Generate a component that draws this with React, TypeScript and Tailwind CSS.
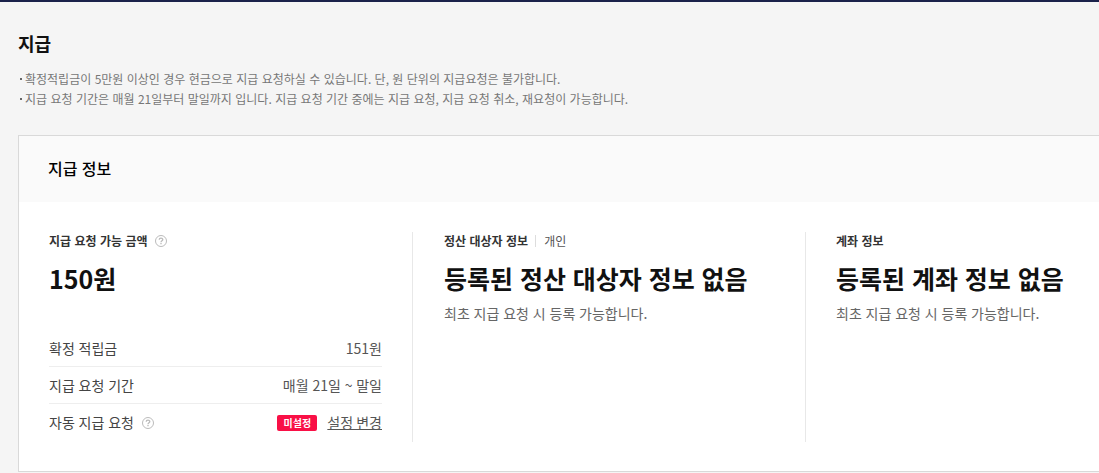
import React from 'react';

const notices = [
  '확정적립금이 5만원 이상인 경우 현금으로 지급 요청하실 수 있습니다. 단, 원 단위의 지급요청은 불가합니다.',
  '지급 요청 기간은 매월 21일부터 말일까지 입니다. 지급 요청 기간 중에는 지급 요청, 지급 요청 취소, 재요청이 가능합니다.',
];

function HelpIcon() {
  return (
    <svg className="w-3 h-3 shrink-0" viewBox="0 0 12 12" fill="none" stroke="#bbbbbb">
      <circle cx="6" cy="6" r="5.5" />
      <path strokeWidth="1.3" d="M4.2 4.7C4.2 2.6 7.8 2.6 7.8 4.6C7.8 5.8 6 5.8 6 7.2M6 8V9.3" />
    </svg>
  );
}

function App() {
  return (
    <div className="h-[473px] overflow-hidden bg-[#f5f5f5] border-t-2 border-[#1b224b] pl-[18px] font-['Noto_Sans_CJK_KR',sans-serif] text-[#111] [word-spacing:0.7px]">
      <h1 className="mt-[28px] h-[26px] leading-[26px] text-[18px] font-bold">지급</h1>
      <ul className="mt-[13px] text-[12px] leading-[20px] text-[#777] whitespace-nowrap">
        {notices.map((notice) => (
          <li key={notice} className="flex items-center">
            <span className="ml-[2px] mr-[3px] w-[2px] h-[2px] bg-[#666]" />
            {notice}
          </li>
        ))}
      </ul>

      <section className="mt-[26px] w-[1160px] h-[337px] border border-[#d9d9d9] bg-white">
        <h2 className="h-[66px] leading-[64px] pl-[29px] bg-[#fafafa] text-[16px] font-medium text-black">지급 정보</h2>
        <div className="flex pt-[30px] pl-[30px] whitespace-nowrap">
          <div className="w-[364px] h-[210px] pr-[30px] border-r border-[#e8e8e8]">
            <div className="flex items-center gap-[7px] h-[18px] text-[12px] font-bold text-[#333]">
              지급 요청 가능 금액
              <HelpIcon />
            </div>
            <p className="mt-[9px] h-[38px] leading-[38px] text-[25px] font-bold">150원</p>
            <dl className="mt-[33px] text-[14px] text-[#444]">
              <div className="flex items-center justify-between h-[37px] border-b border-[#eee]">
                <dt>확정 적립금</dt>
                <dd className="text-[#555]">151원</dd>
              </div>
              <div className="flex items-center justify-between h-[37px] border-b border-[#eee]">
                <dt>지급 요청 기간</dt>
                <dd className="text-[#555]">매월 21일 ~ 말일</dd>
              </div>
              <div className="flex items-center justify-between h-[37px]">
                <dt className="flex items-center gap-[8px]">
                  자동 지급 요청
                  <HelpIcon />
                </dt>
                <dd className="flex items-center gap-[10px] text-[#555]">
                  <span className="w-[40px] h-[16px] leading-[16px] rounded-[2px] bg-[#f91046] text-center text-[10px] font-bold text-white">미설정</span>
                  <a className="underline [word-spacing:0px]" href="#">설정 변경</a>
                </dd>
              </div>
            </dl>
          </div>
          <div className="w-[393px] h-[210px] pl-[31px] border-r border-[#e8e8e8]">
            <div className="flex items-center h-[18px] text-[12px] font-bold text-[#333]">
              정산 대상자 정보
              <span className="ml-[7px] pl-[8px] border-l border-[#ddd] h-[12px] leading-[12px] font-normal text-[#555]">개인</span>
            </div>
            <p className="mt-[9px] h-[38px] leading-[38px] text-[25px] font-bold [word-spacing:1.2px]">등록된 정산 대상자 정보 없음</p>
            <p className="mt-[6px] leading-[20px] text-[14px] text-[#666]">최초 지급 요청 시 등록 가능합니다.</p>
          </div>
          <div className="h-[210px] pl-[30px]">
            <div className="flex items-center h-[18px] text-[12px] font-bold text-[#333]">계좌 정보</div>
            <p className="mt-[9px] h-[38px] leading-[38px] text-[25px] font-bold [word-spacing:1.2px]">등록된 계좌 정보 없음</p>
            <p className="mt-[6px] leading-[20px] text-[14px] text-[#666]">최초 지급 요청 시 등록 가능합니다.</p>
          </div>
        </div>
      </section>
    </div>
  );
}

export default App;
